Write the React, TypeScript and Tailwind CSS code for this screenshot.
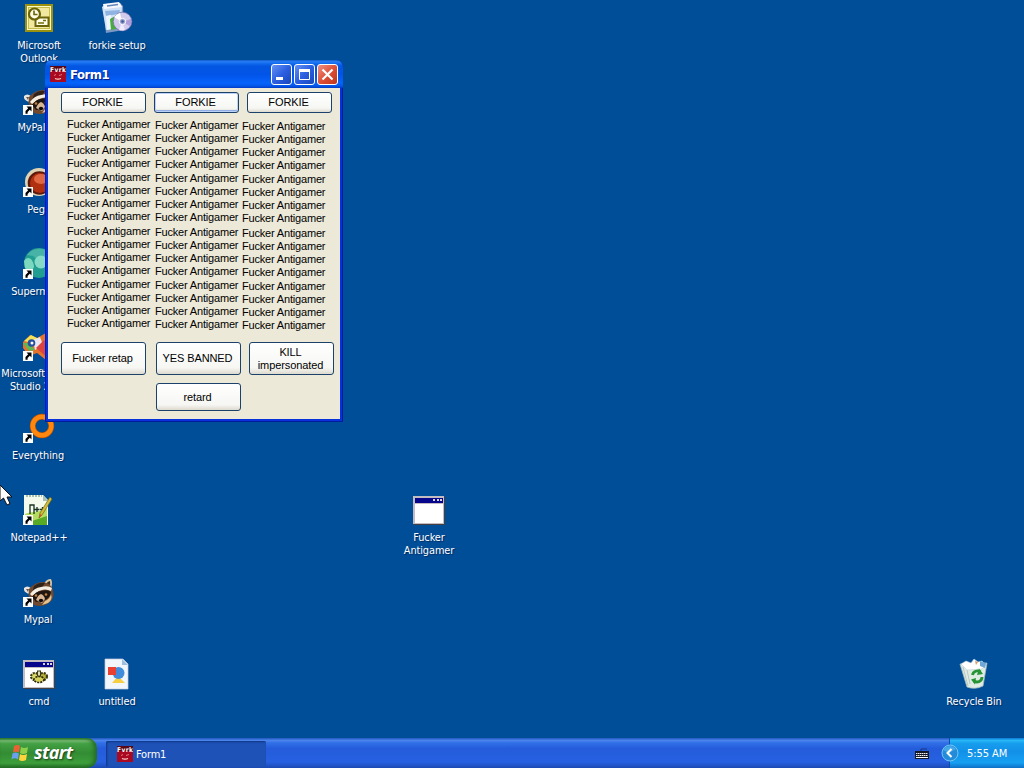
import type { ReactNode } from "react";

const PHRASE = "Fucker Antigamer";

function ShortcutArrow() {
  return (
    <g>
      <rect x="0" y="21" width="10" height="10" fill="#fff" />
      <path d="M3.500 22.500h5v5l-1.700-1.700L4.600 28v1.800H2.500V27l2.700-2.800z" fill="#000" />
    </g>
  );
}

function OutlookIcon() {
  return (
    <>
      <rect x="2" y="2" width="28" height="28" fill="#9a920f" />
      <rect x="4" y="4" width="24" height="24" fill="#fbf6c8" />
      <rect x="5.500" y="5.500" width="21" height="21" fill="#f0e8a0" stroke="#c8bd48" />
      <rect x="12.500" y="15.500" width="13" height="8.500" fill="#fffde8" stroke="#6b640a" strokeWidth="2" />
      <path d="M20 18.500h3M15 21h6" stroke="#756d0c" strokeWidth="1.600" />
      <circle cx="11.500" cy="12" r="5.500" fill="#fffde8" stroke="#6b640a" strokeWidth="2.200" />
      <path d="M11 8.500V12.500h3.500" stroke="#6b640a" strokeWidth="1.600" fill="none" />
    </>
  );
}

function SetupIcon() {
  return (
    <>
      <path d="M2 4l17-3 3 3 1 24-18 3z" fill="#7e98c4" />
      <path d="M1 5l4-3 14-1 2 4-1 20-15 3z" fill="#cfe1f6" />
      <path d="M2 2l16-2 3 5-18 2z" fill="#f5f9ff" />
      <path d="M6 4l11-1.500" stroke="#6484bb" strokeWidth="1.500" />
      <path d="M4 9l15-1-1 4-13 2z" fill="#8fb4e2" />
      <path d="M5 14l5-1 1 14-5 1z" fill="#edf5ff" />
      <path d="M9 17l9-5 1 14-9 2z" fill="#46ad37" />
      <circle cx="21.500" cy="19.500" r="9.300" fill="#d2cbee" stroke="#7773ae" strokeWidth="0.800" />
      <path d="M21 20l-8-5a9.500 9.500 0 0 1 6-4z" fill="#fff" />
      <path d="M21 20l9-3a9 9 0 0 1-1 7z" fill="#ad9edb" />
      <path d="M21 20l-3 8a9 9 0 0 0 6 0z" fill="#f1ebff" />
      <circle cx="21.500" cy="19.500" r="3.200" fill="#9da1cc" stroke="#fff" />
      <circle cx="21.500" cy="19.500" r="1.300" fill="#365b9b" />
    </>
  );
}

function RaccoonIcon() {
  return (
    <>
      {/* ears */}
      <path d="M1 12q3-3 7 0l-1 6q-5-1-6-4z" fill="#e8e4df" />
      <path d="M3 13l3 0-1 3z" fill="#6a5950" />
      <path d="M21 8q2-5 7-5 2 4 0 9z" fill="#d8c7a6" />
      <path d="M23 8q2-3 4-3 1 3-1 6z" fill="#3d2a1c" />
      {/* head */}
      <path d="M6 13q6-7 14-7 8 1 10 8 2 8-3 12-7 6-16 3-7-5-5-16z" fill="#70492e" />
      <path d="M11 10q5-4 11-3l-4 6-9 4z" fill="#31221a" />
      <path d="M7 18q4-6 11-7 7-2 11 1l-1 3q-6-3-12 0l-7 5z" fill="#f5eee2" />
      <path d="M9 21q4-6 9-6 7-2 10 1-1 6-6 8l-9 2z" fill="#1f1612" />
      <circle cx="13" cy="19.500" r="1.300" fill="#c77f39" />
      <circle cx="23" cy="18.500" r="1.300" fill="#c77f39" />
      <path d="M13 24q2-5 5-6 3 1 4 5l-3 4z" fill="#d9b594" />
      <ellipse cx="18" cy="24.500" rx="2.200" ry="1.700" fill="#100c0b" />
      <path d="M22 25q5-2 6-7 2 6-3 9l-6 2z" fill="#e6c28f" />
      <ShortcutArrow />
    </>
  );
}

function PegIcon() {
  return (
    <>
      <circle cx="16" cy="16" r="14" fill="#ded4b4" />
      <circle cx="16.500" cy="17" r="11.800" fill="#5c190c" />
      <circle cx="17" cy="17" r="10" fill="#b03010" />
      <ellipse cx="18" cy="13" rx="7" ry="5" fill="#df6842" />
      <ShortcutArrow />
    </>
  );
}

function SpheresIcon() {
  return (
    <>
      <circle cx="16" cy="15" r="15" fill="#209e91" />
      <path d="M4 7A15 15 0 0 1 29 8l-6 1-7 4-6-5z" fill="#46b3a6" />
      <path d="M1 13c4-7 10-1 10 6l-3 5-6-4z" fill="#7bd8bf" />
      <circle cx="18" cy="14" r="6.500" fill="#84dac6" />
      <ShortcutArrow />
    </>
  );
}

function StudioIcon() {
  return (
    <>
      <path d="M0 12l7-7 7 3 9-5 7 7-7 8 6 7-6 5-9-7-8 3-6-8z" fill="#e5732b" />
      <path d="M1 11l7-6 8 4-7 4z" fill="#f4e359" />
      <path d="M0 13l6 0 6 7-6 1z" fill="#61b754" />
      <path d="M10 10l7-3 3 8-8 5z" fill="#ece6ee" />
      <circle cx="8.500" cy="13" r="3.800" fill="#244f9e" />
      <circle cx="9" cy="13" r="1.500" fill="#fff" />
      <path d="M13 18l8-8 9 12-5 6z" fill="#dc443f" />
      <ShortcutArrow />
    </>
  );
}

function EverythingIcon() {
  return (
    <>
      <circle cx="19" cy="14" r="9.300" fill="none" stroke="#b94f00" strokeWidth="5.800" />
      <circle cx="19" cy="14" r="9.300" fill="none" stroke="#ff870d" strokeWidth="4.600" />
      <ShortcutArrow />
    </>
  );
}

function NotepadIcon() {
  return (
    <>
      <path d="M1 1h19l5 5v25H1z" fill="#f4faec" />
      <path d="M2 20c8-3 14-1 22-6v16H2z" fill="#b4dc5f" />
      <path d="M9 27l15-5v9H9z" fill="#57aa26" />
      <path d="M3 2h16" stroke="#8caf98" strokeWidth="1.500" strokeDasharray="2 1" />
      <path d="M20 1v6h5z" fill="#a8c1b6" />
      <path d="M7 20v-9h4v9M14 13v5M11.500 15.500h5M19.500 13v5M17 15.500h5" stroke="#173023" strokeWidth="1.300" fill="none" />
      <path d="M27 3l2 2-10 16-3 3 1-5z" fill="#d8ba35" stroke="#5e6d24" strokeWidth="0.700" />
      <path d="M17 20l2 1-3 3z" fill="#d24e33" />
      <ShortcutArrow />
    </>
  );
}

function AppFrame() {
  return (
    <g shapeRendering="crispEdges">
      <rect x="1" y="3" width="31" height="28" fill="#443f42" />
      <rect x="0" y="2" width="31" height="28" fill="#c3bdc1" />
      <rect x="2" y="4" width="28" height="5" fill="#08058d" />
      <rect x="2" y="10" width="28" height="19" fill="#fff" />
      <rect x="20" y="5" width="2" height="2" fill="#d8d5df" />
      <rect x="24" y="5" width="2" height="2" fill="#d8d5df" />
      <rect x="27" y="5" width="2" height="2" fill="#d8d5df" />
    </g>
  );
}

function CmdIcon() {
  return (
    <>
      <AppFrame />
      <ellipse cx="12" cy="18.500" rx="4" ry="3.500" fill="#dddc68" stroke="#3c3a17" strokeWidth="2.200" strokeDasharray="2 1" />
      <ellipse cx="20" cy="18.500" rx="4" ry="3.500" fill="#b7b33a" stroke="#3c3a17" strokeWidth="2.200" strokeDasharray="2 1" />
      <ellipse cx="16" cy="21.500" rx="5" ry="3" fill="#d6d159" stroke="#29270e" strokeWidth="1.600" strokeDasharray="2 1" />
      <rect x="14.500" y="13" width="3" height="5" fill="#e2dfbd" stroke="#403d15" />
    </>
  );
}

function PaintIcon() {
  return (
    <>
      <path d="M4 1h18l5 5v25H4z" fill="#f1f5fc" stroke="#c2cfdf" strokeWidth="0.700" />
      <path d="M21 1v6h6z" fill="#9fbddd" />
      <path d="M11 25l6-7 7 7z" fill="#f4cf45" />
      <circle cx="17.500" cy="15" r="6" fill="#418bdc" />
      <rect x="7" y="9" width="8" height="8" fill="#e94032" />
    </>
  );
}

function RecycleIcon() {
  return (
    <>
      <path d="M2 6l27-1-4 23q-8 4-16 1z" fill="#dfece5" stroke="#a3b9bb" strokeWidth="0.800" />
      <path d="M3 6l5-3 5 2 3-4 4 3 4-1 4 4-4 4-15 1z" fill="#fff" stroke="#b9d2d9" strokeWidth="0.600" />
      <path d="M22 3l6 2-1 5-5-2z" fill="#6da8d6" />
      <path d="M17 3l3 1-2 3z" fill="#db9b66" />
      <path d="M5 9l5 19M9 12l3 14" stroke="#b8c9c2" />
      <path d="M14.500 17a5 5 0 0 1 8-3M24 19a5 5 0 0 1-8 4" fill="none" stroke="#269434" strokeWidth="2.900" />
      <path d="M21 10.500l4 5.500-6 1zM18 20l-5 1.500 4 5z" fill="#269434" />
    </>
  );
}

interface DesktopIconProps {
  label: ReactNode;
  place: string;
  children: ReactNode;
}

function DesktopIcon({ label, place, children }: DesktopIconProps) {
  return (
    <div className={`absolute flex w-20 flex-col items-center ${place}`}>
      <svg className="h-8 w-8" viewBox="0 0 32 32">{children}</svg>
      <div className="mt-[5px] text-center text-[10.9px] leading-[13px] tracking-[-0.1px] whitespace-nowrap text-white [text-shadow:1px_1px_1px_#002b60]">
        {label}
      </div>
    </div>
  );
}

function FormIcon({ className }: { className: string }) {
  return (
    <svg className={className} viewBox="0 0 16 16">
      <rect width="16" height="16" fill="#a90921" />
      <rect width="16" height="5" fill="#590716" />
      <text x="0" y="5.500" fontSize="6.500" fontWeight="700" fill="#fff" textLength="16">Fvrk</text>
      <path d="M4 9.500l2-1M9 9.500l3-1" stroke="#e17a78" />
      <path d="M5 12.500q3 1.200 6 0" stroke="#ffd5ca" strokeWidth="1.300" fill="none" />
    </svg>
  );
}

function FormButton({ children, size, focused }: { children: ReactNode; size: string; focused?: boolean }) {
  return (
    <button
      className={`flex w-[85px] shrink-0 items-center justify-center rounded-[3px] border border-[#1c426c] bg-[linear-gradient(to_bottom,#ffffff_0%,#f6f6f3_80%,#dddace_100%)] pr-[2px] text-center text-[11px] leading-[13px] tracking-[-0.1px] text-black ${size} ${
        focused ? "shadow-[inset_0_0_0_1px_#bdd1f7,inset_0_-2px_0_#8faee3]" : ""
      }`}
    >
      {children}
    </button>
  );
}

function LabelColumn({ place }: { place: string }) {
  return (
    <div className={`flex w-[84px] shrink-0 flex-col gap-[1.400px] ${place}`}>
      {[0, 1, 2, 3].map((group) => (
        <div key={group}>
          {[0, 1, 2, 3].map((row) => (
            <div key={row} className="h-[13px] text-[11px] leading-[13px] tracking-[-0.18px] whitespace-nowrap text-black">
              {PHRASE}
            </div>
          ))}
        </div>
      ))}
    </div>
  );
}

function CaptionButton({ tone, children }: { tone: string; children: ReactNode }) {
  return (
    <button className={`flex h-[21px] w-[21px] items-center justify-center rounded-[3px] border border-white ${tone}`}>
      <svg className="h-[19px] w-[19px]" viewBox="0 0 19 19" fill="none" stroke="#fff">{children}</svg>
    </button>
  );
}

function FormWindow() {
  return (
    <div className="absolute top-[60px] left-[45px] flex h-[362px] w-[298px] flex-col rounded-t-[7px] bg-[#0831d9] px-[3px] pb-[3px] shadow-[inset_-1px_-1px_0_#001da0,inset_1px_0_0_#0019cf]">
      <div className="-mx-[3px] flex h-7 shrink-0 items-center rounded-t-[7px] bg-[linear-gradient(to_bottom,#0a5bd0_0%,#2a7cf0_6%,#126cf0_12%,#0356e0_22%,#0254e8_52%,#0663fc_82%,#0458eb_92%,#003bc6_100%)] pr-[5px] pl-[5px]">
        <FormIcon className="h-4 w-4" />
        <span className="mt-[2px] ml-1 text-[13px] font-bold tracking-[-0.5px] text-white [text-shadow:1px_1px_1px_#0a1883]">
          Form1
        </span>
        <div className="ml-auto flex gap-[2px] pt-px">
          <CaptionButton tone="bg-linear-to-br from-[#6591f5] via-[#2c5fe0] to-[#1846bd]">
            <path d="M4 13.500h7" strokeWidth="3" />
          </CaptionButton>
          <CaptionButton tone="bg-linear-to-br from-[#6591f5] via-[#2c5fe0] to-[#1846bd]">
            <path d="M4.500 5v9.500h10V5" />
            <path d="M4 5.500h11" strokeWidth="3" />
          </CaptionButton>
          <CaptionButton tone="bg-linear-to-br from-[#ee9080] via-[#de5038] to-[#bd3419]">
            <path d="M4.500 4.500l10 10M14.500 4.500l-10 10" strokeWidth="2.200" />
          </CaptionButton>
        </div>
      </div>

      <div className="flex flex-1 flex-col bg-[#ece9d8] pt-1 pl-[13px] font-['Liberation_Sans',Arial,sans-serif]">
        <div className="flex gap-2">
          <FormButton size="h-[21px]">FORKIE</FormButton>
          <FormButton size="h-[21px]" focused>FORKIE</FormButton>
          <FormButton size="h-[21px]">FORKIE</FormButton>
        </div>
        <div className="flex h-[229px] gap-[4px] pt-[5px] pl-[6px]">
          <LabelColumn place="" />
          <LabelColumn place="pt-px" />
          <LabelColumn place="-ml-px pt-[2px]" />
        </div>
        <div className="flex">
          <FormButton size="h-[33px]">Fucker retap</FormButton>
          <FormButton size="ml-[10px] h-[33px]">YES BANNED</FormButton>
          <FormButton size="ml-2 h-[33px]">
            <span>KILL<br />impersonated</span>
          </FormButton>
        </div>
        <div className="mt-2 flex pl-[95px]">
          <FormButton size="h-7">retard</FormButton>
        </div>
      </div>
    </div>
  );
}

function Taskbar() {
  return (
    <div className="flex h-[30px] shrink-0 bg-[linear-gradient(to_bottom,#2057bf_0%,#4a84ec_8%,#3270e7_16%,#245cdb_35%,#2761e1_80%,#1b49b2_100%)]">
      <div className="flex h-[30px] w-[97px] items-center rounded-r-[10px] bg-[linear-gradient(to_bottom,#287a2a_0%,#79bd75_9%,#43a043_19%,#338c33_50%,#3d9e3b_84%,#216b22_100%)] pl-[11px] shadow-[inset_-3px_0_4px_#236b27]">
        <svg className="h-[19px] w-[19px]" viewBox="0 0 19 19">
          <path d="M3 2q4-2 6 0L8 8.500Q5 7 2 8.500z" fill="#e86235" />
          <path d="M10 3q3 2 7 0l-1 6q-4 2-7 0z" fill="#8ed04b" />
          <path d="M1.500 9.500q3-2 6.300 0L7 15.500q-3-2.500-6.500 0z" fill="#6ba0ee" />
          <path d="M9 10q3 2 7 0l-1 6q-4 2-7 0z" fill="#ffd43d" />
        </svg>
        <span className="ml-[4px] pb-[2px] text-[18px] leading-none font-bold tracking-[-0.6px] text-white italic font-['Open_Sans',sans-serif] [text-shadow:1px_1px_2px_#183c17]">
          start
        </span>
      </div>
      <div className="mt-[3px] ml-[9px] flex h-[26px] w-[160px] items-center rounded-[2px] bg-[#1e52b7] pl-[11px] shadow-[inset_1px_1px_2px_#123680]">
        <FormIcon className="h-4 w-4" />
        <span className="mt-[2px] ml-[3px] text-[11px] tracking-[-0.2px] text-white">Form1</span>
      </div>
      <svg className="mt-[8px] ml-auto h-4 w-4" viewBox="0 0 16 16">
        <path d="M7 5V3h6" stroke="#163880" fill="none" />
        <rect x="1" y="5" width="14" height="8" fill="#161a25" />
        <path d="M2 7.500h12M2 9.500h12" stroke="#f4f0f0" strokeDasharray="1.500 0.500" />
        <path d="M2 11.500h12" stroke="#fff" />
      </svg>
      <div className="ml-[19px] flex w-[75px] items-center border-l border-[#0b4cac] bg-[linear-gradient(to_bottom,#0d77d1_0%,#27b8f8_8%,#179ded_18%,#1290e8_45%,#16a0f2_82%,#0d70c5_100%)]">
        <svg className="-ml-[9px] h-[18px] w-[18px] shrink-0" viewBox="0 0 18 18">
          <circle cx="9" cy="9" r="8" fill="#248bd9" stroke="#70c6f5" />
          <path d="M2 6a8 8 0 0 1 13-1L8 9z" fill="#5ebaf1" opacity="0.6" />
          <path d="M10.500 5L6.500 9l4 4" fill="none" stroke="#fff" strokeWidth="2" />
        </svg>
        <span className="mt-[2px] ml-[8px] text-[11px] tracking-[-0.05px] whitespace-nowrap text-white">5:55 AM</span>
      </div>
    </div>
  );
}

export default function App() {
  return (
    <div className="flex h-[768px] w-[1024px] flex-col overflow-hidden bg-[#004e98] font-['DejaVu_Sans_Condensed','DejaVu_Sans',sans-serif]">
      <main className="relative flex-1">
        <DesktopIcon place="top-[2px] left-[-1px]" label={<>Microsoft<br />Outlook</>}><OutlookIcon /></DesktopIcon>
        <DesktopIcon place="top-[2px] left-[77px]" label="forkie setup"><SetupIcon /></DesktopIcon>
        <DesktopIcon place="top-[84px] left-[-1px]" label="MyPal 68"><RaccoonIcon /></DesktopIcon>
        <DesktopIcon place="top-[166px] left-[-1px]" label="Pega"><PegIcon /></DesktopIcon>
        <DesktopIcon place="top-[248px] left-[-1px]" label="Supermium"><SpheresIcon /></DesktopIcon>
        <DesktopIcon place="top-[330px] left-[-1px]" label={<>Microsoft Visual<br />Studio 2010</>}><StudioIcon /></DesktopIcon>
        <DesktopIcon place="top-[412px] left-[-1px]" label={<span className="mr-[2px]">Everything</span>}><EverythingIcon /></DesktopIcon>
        <DesktopIcon place="top-[494px] left-[-1px]" label="Notepad++"><NotepadIcon /></DesktopIcon>
        <DesktopIcon place="top-[576px] left-[-1px]" label={<span className="mr-[2px]">Mypal</span>}><RaccoonIcon /></DesktopIcon>
        <DesktopIcon place="top-[658px] left-[-1px]" label="cmd"><CmdIcon /></DesktopIcon>
        <DesktopIcon place="top-[658px] left-[77px]" label="untitled"><PaintIcon /></DesktopIcon>
        <DesktopIcon place="top-[494px] left-[389px]" label={<>Fucker<br />Antigamer</>}><AppFrame /></DesktopIcon>
        <DesktopIcon place="top-[658px] left-[934px]" label="Recycle Bin"><RecycleIcon /></DesktopIcon>
        <FormWindow />
        <svg className="absolute top-[484px] left-0 h-[23px] w-3" viewBox="0 0 12 23">
          <path d="M0 1v16l3.500-3 3.500 7 3-1.500-3-6.500h5z" fill="#fff" stroke="#111" />
        </svg>
      </main>
      <Taskbar />
    </div>
  );
}
